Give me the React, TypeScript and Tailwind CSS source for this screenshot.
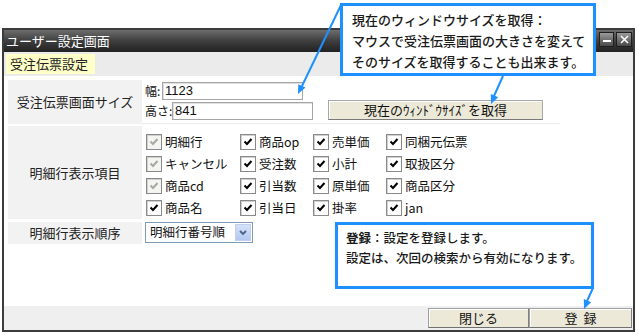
import React from "react";

const JP = { fontFamily: '"Noto Sans CJK JP", "Noto Sans", sans-serif' };

function Check({ disabled, checked = true }: { disabled?: boolean; checked?: boolean }) {
  return (
    <span
      className={`w-[16px] h-[16px] shrink-0 border border-[#8a8a8a] flex items-center justify-center ${
        disabled ? "bg-[#f4f4f0]" : "bg-white"
      } shadow-[inset_1px_1px_0_#d0d0d0]`}
    >
      {checked && (
        <svg width="10" height="10" viewBox="0 0 10 10">
          <path
            d="M1.5 4.5 L4 7 L8.5 2"
            fill="none"
            stroke={disabled ? "#a8a8a8" : "#000"}
            strokeWidth="2"
          />
        </svg>
      )}
    </span>
  );
}

function CB({ label, disabled }: { label: string; disabled?: boolean }) {
  return (
    <div className="flex items-center h-[22px] gap-[3px]">
      <Check disabled={disabled} />
      <span className="text-[12.5px] text-[#111] leading-none whitespace-nowrap">{label}</span>
    </div>
  );
}

const cols = [
  [
    { l: "明細行", d: true },
    { l: "キャンセル", d: true },
    { l: "商品cd", d: true },
    { l: "商品名" },
  ],
  [{ l: "商品op" }, { l: "受注数" }, { l: "引当数" }, { l: "引当日" }],
  [{ l: "売単価" }, { l: "小計" }, { l: "原単価" }, { l: "掛率" }],
  [{ l: "同梱元伝票" }, { l: "取扱区分" }, { l: "商品区分" }, { l: "jan" }],
];

export default function App() {
  const rows = [0, 1, 2, 3];
  return (
    <div className="relative w-[639px] h-[335px] bg-white overflow-hidden" style={JP}>
      <div className="pt-[28px] pl-[2px]">
        <div className="w-[633px] h-[304px] border-2 border-[#3c3c3c] flex flex-col">
          {/* title bar */}
          <div className="h-[22px] bg-gradient-to-b from-[#6e6e6e] via-[#3e3e3e] to-[#222] flex items-start justify-between">
            <span className="text-white text-[13px] leading-[22px] pl-[2px]">ユーザー設定画面</span>
            <div className="flex gap-[2px] pt-[2px] pr-[1px]">
              <div className="w-[15px] h-[15px] border border-[#1e1e1e] bg-gradient-to-b from-[#9a9a9a] to-[#4a4a4a] flex items-end justify-center pb-[4px]">
                <div className="w-[8px] h-[2px] bg-white" />
              </div>
              <div className="w-[16px] h-[15px] border border-[#1e1e1e] bg-gradient-to-b from-[#9a9a9a] to-[#4a4a4a] flex items-center justify-center">
                <svg width="9" height="9" viewBox="0 0 9 9">
                  <path d="M1 1 L8 8 M8 1 L1 8" stroke="#fff" strokeWidth="1.5" />
                </svg>
              </div>
            </div>
          </div>
          {/* tab row */}
          <div className="h-[24px] bg-[#ebebeb] pl-[2px] pt-[2px]">
            <div className="w-[89px] h-[20px] bg-[#ffffc8] flex items-center pl-[4px] text-[13px] text-[#222]">
              受注伝票設定
            </div>
          </div>
          {/* content */}
          <div className="flex-1 bg-white pl-[4px] pt-[4px] flex flex-col">
            {/* row 1 */}
            <div className="h-[44px] flex">
              <div className="w-[134px] bg-[#f2f2f2] flex items-center justify-center text-[13px] text-[#222]">
                受注伝票画面サイズ
              </div>
              <div className="w-[418px] border-b border-[#ececec] pl-[3px] pt-[2px] flex flex-col gap-[2px]">
                <div className="flex items-center h-[18px]">
                  <span className="text-[12px] text-[#111] w-[17px] whitespace-nowrap leading-none">幅:</span>
                  <div
                    className="w-[141px] h-[18px] border border-[#a5a5a5] shadow-[inset_1px_1px_0_#e0e0e0] bg-white text-[13px] leading-[16px] pl-[2px] text-[#111]"
                    style={{ fontFamily: '"Liberation Sans", sans-serif' }}
                  >
                    1123
                  </div>
                </div>
                <div className="flex items-end h-[18px]">
                  <span className="text-[12px] text-[#111] w-[27px] leading-[18px] whitespace-nowrap">高さ:</span>
                  <div
                    className="w-[141px] h-[18px] border border-[#a5a5a5] shadow-[inset_1px_1px_0_#e0e0e0] bg-white text-[13px] leading-[16px] pl-[2px] text-[#111]"
                    style={{ fontFamily: '"Liberation Sans", sans-serif' }}
                  >
                    841
                  </div>
                  <div className="ml-[15px] w-[215px] h-[20px] bg-[#ece9d8] border border-[#a8a8a8] border-b-[#7a7a7a] shadow-[inset_1px_1px_0_#ffffff] flex items-center justify-center text-[13px] text-[#111] whitespace-nowrap">
                    現在のｳｨﾝﾄﾞｳｻｲｽﾞを取得
                  </div>
                </div>
              </div>
            </div>
            {/* row 2 */}
            <div className="h-[93px] mt-[2px] flex">
              <div className="w-[134px] bg-[#f2f2f2] flex items-center justify-center text-[13px] text-[#222]">
                明細行表示項目
              </div>
              <div className="pl-[4px] pt-[5px] grid grid-cols-[94px_73px_73px_auto]">
                {rows.map((r) =>
                  cols.map((c, ci) => (
                    <CB key={`${r}-${ci}`} label={c[r].l} disabled={(c[r] as { d?: boolean }).d} />
                  ))
                )}
              </div>
            </div>
            {/* row 3 */}
            <div className="h-[22px] mt-[3px] flex">
              <div className="w-[134px] bg-[#f2f2f2] flex items-center justify-center text-[13px] text-[#222]">
                明細行表示順序
              </div>
              <div className="pl-[3px]">
                <div className="w-[108px] h-[21px] border border-[#7f9db9] bg-white flex items-center justify-between pl-[4px] pr-[1px]">
                  <span className="text-[12.5px] text-[#111] leading-none whitespace-nowrap">明細行番号順</span>
                  <div className="w-[16px] h-[17px] bg-gradient-to-b from-[#d6e2fa] to-[#b4c8f0] border border-[#c0d0f0] flex items-center justify-center">
                    <svg width="8" height="6" viewBox="0 0 8 6">
                      <path d="M1 1 L4 4 L7 1" fill="none" stroke="#4d6185" strokeWidth="1.8" />
                    </svg>
                  </div>
                </div>
              </div>
            </div>
          </div>
          {/* bottom bar */}
          <div className="h-[24px] bg-[#efefef] flex items-center justify-end pr-[1px]">
            <div className="w-[101px] h-[20px] bg-[#ece9d8] border border-[#a0a0a0] border-b-[#707070] border-r-[#808080] shadow-[inset_1px_1px_0_#fff] flex items-center justify-center text-[13px] text-[#111]">
              閉じる
            </div>
            <div className="w-[103px] h-[20px] bg-[#ece9d8] border border-[#a0a0a0] border-b-[#707070] border-r-[#808080] shadow-[inset_1px_1px_0_#fff] flex items-center justify-center text-[13px] text-[#111] tracking-[6px] pl-[6px]">
              登録
            </div>
          </div>
        </div>
      </div>

      {/* callout 1 */}
      <div className="absolute left-[340px] top-[3px] w-[256px] h-[73px] border-[3px] border-[#1e90ff] bg-white pl-[9px] pt-[3px] text-[13px] font-medium leading-[21px] text-[#1a1a1a] whitespace-nowrap">
        <div>現在のウィンドウサイズを取得：</div>
        <div>マウスで受注伝票画面の大きさを変えて</div>
        <div>そのサイズを取得することも出来ます。</div>
      </div>

      {/* callout 2 */}
      <div className="absolute left-[335px] top-[222px] w-[259px] h-[67px] border-[3px] border-[#1e90ff] bg-white pl-[8px] pt-[3px] text-[12.5px] font-medium leading-[20px] text-[#1a1a1a] whitespace-nowrap">
        <div>
          <span className="font-bold">登録</span>：設定を登録します。
        </div>
        <div>設定は、次回の検索から有効になります。</div>
      </div>

      {/* arrows */}
      <svg className="absolute left-0 top-0" width="639" height="335" viewBox="0 0 639 335">
        <g stroke="#1e90ff" strokeWidth="2" fill="#1e90ff">
          <line x1="341" y1="5" x2="302" y2="86" />
          <polygon points="298,94 305.5,87.6 298.3,84.2" stroke="none" />
          <line x1="503" y1="76" x2="494" y2="96" />
          <polygon points="491,104 498.2,97.3 490.8,94.1" stroke="none" />
          <line x1="593" y1="288" x2="587" y2="301" />
          <polygon points="584,309 591.2,302.3 583.8,299.1" stroke="none" />
        </g>
      </svg>
    </div>
  );
}
